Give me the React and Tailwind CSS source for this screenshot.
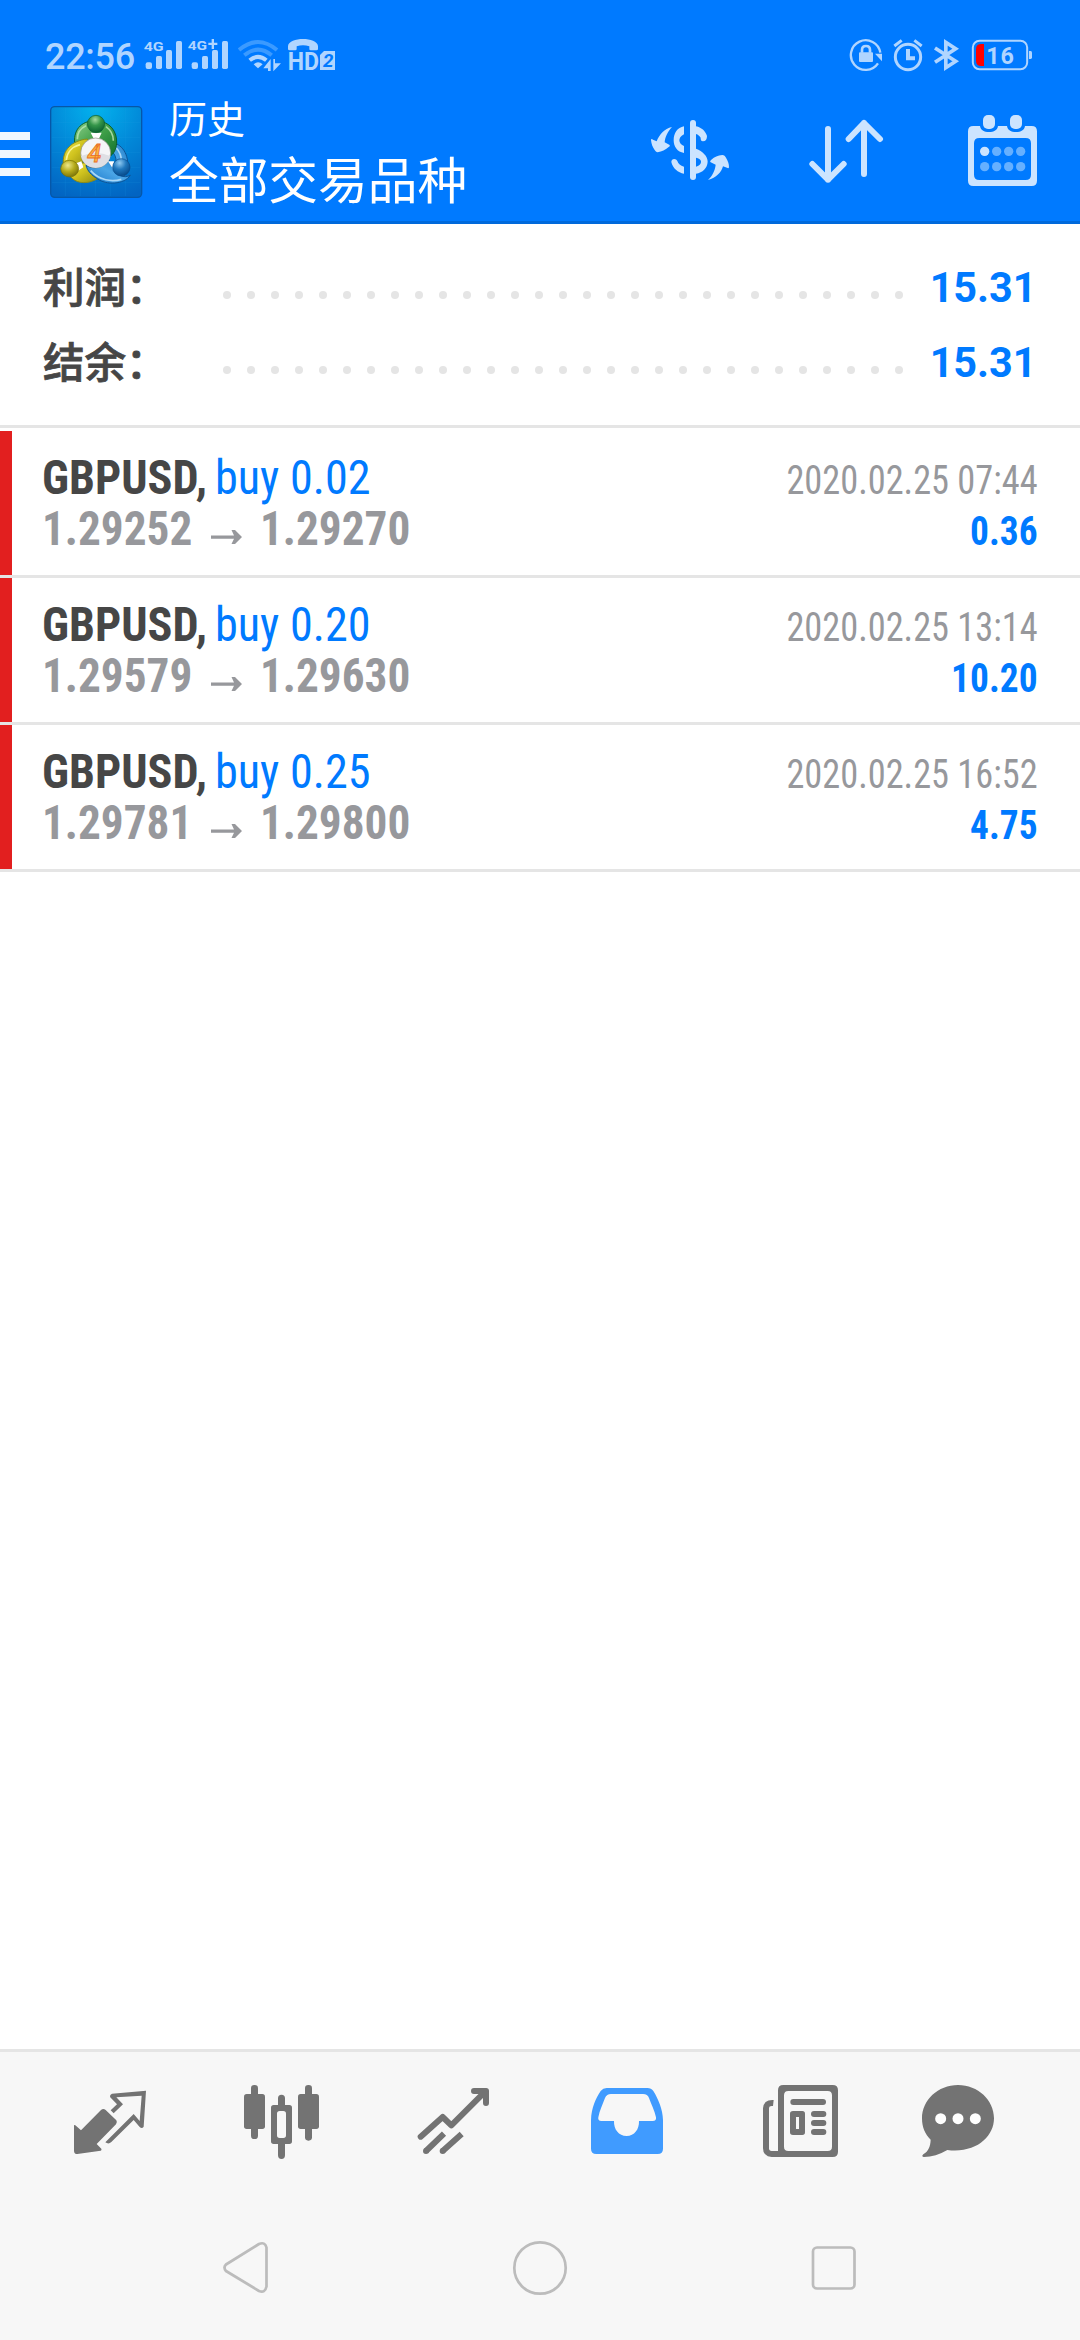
import React from "react";

const PALE = "#b0d5ff";
const ICON = "#cce4ff";
const GRAY = "#737373";

function Signal({ plus }) {
  return plus ? (
    <svg className="ml-1 h-[38px] w-[42px]" viewBox="561 48 126 114" fill={PALE}>
      <text x="563" y="90" fontSize="37" fontWeight="700" fontFamily="Roboto" textLength="58" lengthAdjust="spacingAndGlyphs">4G</text>
      <path d="M625 68h10v-11h7v11h10v7h-10v12h-7v-12h-10z" />
      <rect x="575" y="127" width="19" height="20" rx="6" />
      <rect x="606" y="108" width="18" height="39" rx="5" />
      <rect x="636" y="90" width="18" height="57" rx="5" />
      <rect x="666" y="63" width="18" height="84" rx="5" />
    </svg>
  ) : (
    <svg className="ml-[9px] h-[38px] w-10" viewBox="429 48 120 114" fill={PALE}>
      <text x="431" y="94" fontSize="37" fontWeight="700" fontFamily="Roboto" textLength="60" lengthAdjust="spacingAndGlyphs">4G</text>
      <rect x="437" y="127" width="19" height="20" rx="6" />
      <rect x="468" y="108" width="18" height="39" rx="5" />
      <rect x="498" y="90" width="18" height="57" rx="5" />
      <rect x="528" y="63" width="18" height="84" rx="5" />
    </svg>
  );
}

function Wifi() {
  return (
    <svg className="ml-[9px] h-[38px] w-[43px]" viewBox="714 48 129 114" fill="none">
      <path d="M717 90Q774 42 831 90" stroke="#3b9aff" strokeWidth="12" />
      <path d="M733 106Q774 72 815 106" stroke="#3b9aff" strokeWidth="12" />
      <path d="M749 121Q774 100 799 121" stroke={PALE} strokeWidth="12" />
      <path d="M761 133Q774 121 788 133L774 145Z" fill={PALE} />
      <path d="M790 145L812 117V153H804V145ZM820 117H825V130H843L820 154Z" fill={PALE} />
    </svg>
  );
}

function VoiceHd() {
  return (
    <svg className="ml-1.5 h-[38px] w-[49px]" viewBox="861 48 147 114" fill={PALE}>
      <path d="M864 87V78C867 50 951 50 954 78V87Q954 91 949 91H932Q928 91 928 87V79Q909 72 890 79V87Q890 91 886 91H869Q864 91 864 87Z" />
      <text x="863" y="150" fontSize="77" fontWeight="700" fontFamily="Roboto" textLength="94" lengthAdjust="spacingAndGlyphs">HD</text>
      <path d="M972 93H1005V150H960V105Z" />
      <text x="969" y="142" fontSize="56" fontWeight="700" fontStyle="italic" fontFamily="Roboto" fill="#007aff">2</text>
    </svg>
  );
}

function RotationLock() {
  return (
    <svg className="h-[38px] w-[34px]" viewBox="87 48 102 114" fill="none" stroke={PALE}>
      <path d="M174 130A44.500 44.500 0 1 1 181 98" strokeWidth="7" />
      <path d="M165 101H186V124Z" fill={PALE} stroke="none" />
      <rect x="117" y="97" width="42" height="29" rx="3" fill={PALE} stroke="none" />
      <path d="M126 98V90Q126 78 138 78Q150 78 150 90V98" strokeWidth="8" />
    </svg>
  );
}

function Alarm() {
  return (
    <svg className="ml-2.5 h-[38px] w-[30px]" viewBox="219 48 90 114" fill="none" stroke={PALE} strokeWidth="8">
      <circle cx="264" cy="111" r="38" strokeWidth="9" />
      <path d="M264 87V115H285" strokeWidth="12" />
      <path d="M223 78L245 61M283 61L305 78" strokeWidth="9" />
    </svg>
  );
}

function Bluetooth() {
  return (
    <svg className="ml-2.5 h-[38px] w-[27px]" viewBox="339 48 81 114" fill="none" stroke={PALE} strokeWidth="11">
      <path d="M345 84L407 124L377.500 143V67L407 86L345 127" />
    </svg>
  );
}

function Battery() {
  return (
    <svg className="ml-[11px] h-[38px] w-[62px]" viewBox="453 48 186 114" fill="none">
      <rect x="458.500" y="62.500" width="163" height="85" rx="20" stroke={PALE} strokeWidth="6" />
      <path d="M492 72V138H484Q468 138 468 122V88Q468 72 484 72Z" fill="#f00" />
      <path d="M627 93H632Q636 93 636 98V112Q636 117 632 117H627Z" fill={PALE} />
      <text x="499" y="132" fontSize="70" fontWeight="700" fontFamily="Roboto" fill={PALE} textLength="83" lengthAdjust="spacing">16</text>
    </svg>
  );
}

function AppLogo() {
  return (
    <svg className="ml-5 h-[93px] w-[93px]" viewBox="150 255 279 279">
      <defs>
        <radialGradient id="sky" cx=".5" cy="0" r="1.05">
          <stop offset="0" stopColor="#03b3ee" />
          <stop offset=".5" stopColor="#0288d8" />
          <stop offset="1" stopColor="#0264c2" />
        </radialGradient>
        <linearGradient id="green" x1="0" y1="0" x2="1" y2="1">
          <stop offset="0" stopColor="#8fd08c" />
          <stop offset=".5" stopColor="#3f9f48" />
          <stop offset="1" stopColor="#11702b" />
        </linearGradient>
        <linearGradient id="gold" x1="0" y1="0" x2="1" y2="1">
          <stop offset="0" stopColor="#f4ea4a" />
          <stop offset=".5" stopColor="#cfc21e" />
          <stop offset="1" stopColor="#8f8a12" />
        </linearGradient>
        <linearGradient id="azure" x1="0" y1="1" x2="1" y2="0">
          <stop offset="0" stopColor="#1673c8" />
          <stop offset=".5" stopColor="#4aa5e6" />
          <stop offset="1" stopColor="#1c78c4" />
        </linearGradient>
        <radialGradient id="ballGreen" cx=".45" cy=".25" r=".75">
          <stop offset="0" stopColor="#a5dba0" /><stop offset=".45" stopColor="#35964a" /><stop offset="1" stopColor="#0b6030" />
        </radialGradient>
        <radialGradient id="ballGold" cx=".4" cy=".3" r=".75">
          <stop offset="0" stopColor="#eee88a" /><stop offset=".5" stopColor="#b5ab1b" /><stop offset="1" stopColor="#756f08" />
        </radialGradient>
        <radialGradient id="ballBlue" cx=".4" cy=".25" r=".75">
          <stop offset="0" stopColor="#8fcaf2" /><stop offset=".5" stopColor="#1f77bd" /><stop offset="1" stopColor="#084c8c" />
        </radialGradient>
      </defs>
      <rect x="152" y="260" width="273" height="272" rx="12" fill="url(#sky)" stroke="#0657a8" strokeWidth="4" />
      <path d="M196 264V528M241 264V528M286 264V528M331 264V528M376 264V528M156 308H421M156 353H421M156 398H421M156 443H421M156 488H421" stroke="#2aa5e8" strokeOpacity=".22" strokeWidth="2" />
      <path d="M325 366C360 366 386 396 383 440C383 462 375 472 362 470L340 450C354 430 350 400 330 392Z" fill="url(#azure)" stroke="#0d5496" strokeWidth="3" />
      <path d="M349 384C358 394 364 408 364 422" fill="none" stroke="#a9d8f8" strokeWidth="5" />
      <path d="M224 368C220 325 250 300 288 303C330 303 352 335 350 370C348 388 342 402 328 410L290 390L250 366Z" fill="url(#green)" stroke="#0c6128" strokeWidth="3" />
      <path d="M232 358C232 340 242 324 258 317M318 320C332 330 340 346 340 362" fill="none" stroke="#bde8b5" strokeOpacity=".8" strokeWidth="5" />
      <path d="M262 357C215 362 186 390 190 434L240 440L262 400Z" fill="url(#gold)" stroke="#8f8a12" strokeWidth="3" />
      <path d="M206 462C224 493 262 494 292 476L282 426L238 430C240 448 230 466 206 462Z" fill="url(#gold)" stroke="#8f8a12" strokeWidth="3" />
      <path d="M199 420C201 398 216 380 240 374" fill="none" stroke="#fbf7a0" strokeOpacity=".9" strokeWidth="5" />
      <path d="M258 436C276 446 306 450 324 416L346 448C352 466 370 476 391 466C372 494 318 496 292 476C274 466 262 452 258 436Z" fill="url(#azure)" stroke="#0d5496" strokeWidth="3" />
      <path d="M272 452C298 482 336 486 364 478" fill="none" stroke="#a9d8f8" strokeWidth="5" />
      <path d="M272 338H305L296 358H282ZM228 430L244 424L250 442L234 452ZM324 424L342 424L340 448Z" fill="#fff" />
      <circle cx="288" cy="312" r="26" fill="url(#ballGreen)" stroke="#0b6030" strokeWidth="2" />
      <ellipse cx="209" cy="446" rx="27" ry="25" fill="url(#ballGold)" stroke="#756f08" strokeWidth="2" />
      <circle cx="364" cy="442" r="26" fill="url(#ballBlue)" stroke="#084c8c" strokeWidth="2" />
      <circle cx="287" cy="399" r="45" fill="#f5f5f7" stroke="#8c8c80" strokeWidth="2" />
      <path d="M243 408Q287 390 331 408A45 45 0 0 1 243 408" fill="#dfdfe4" />
      <text x="262" y="425" fontSize="76" fontWeight="500" fontStyle="italic" fontFamily="Roboto" fill="#fdb53e" stroke="#ea6f2a" strokeWidth="2.500">4</text>
    </svg>
  );
}

function CurrencySwap() {
  return (
    <svg className="h-[61px] w-[79px]" viewBox="93 87 237 183" fill={ICON}>
      <path d="M192 109V133C181 139 178 146 178 151C178 159 184 165 192 168V189C172 186 161 170 161 151C161 129 172 113 192 109Z" />
      <path d="M228 109C246 113 257 124 261 138C261 148 257 154 249 154C242 153 242 147 242 143C239 138 234 134 228 132Z" />
      <path fillRule="evenodd" d="M228 176C248 184 263 198 263 215C262 234 248 248 228 251ZM228 203V230C239 227 244 221 243 214C242 208 236 204 228 203Z" />
      <path d="M192 251V230C181 228 175 221 172 213C169 205 154 204 154 216C158 235 174 248 192 251Z" />
      <rect x="210" y="90" width="18" height="180" rx="9" />
      <path d="M156 111C145 122 135 140 134 157L149 165C150 168 149 170 145 172C136 180 126 184 113 187C109 187 106 183 104 180C98 171 94 162 93 150C93 146 96 146 99 149L110 154C118 134 133 116 156 111Z" />
      <path d="M264 270C276 258 285 243 287 224L272 217C269 214 271 212 274 209C284 201 293 196 307 195C312 195 316 199 318 203C324 213 327 221 327 232C327 235 324 235 321 233L309 229C304 247 289 264 264 270Z" />
    </svg>
  );
}

function SortArrows() {
  return (
    <svg className="ml-[79px] h-16 w-[75px]" viewBox="567 87 225 192" fill="none" stroke={ICON} strokeWidth="18" strokeLinecap="round" strokeLinejoin="round">
      <path d="M624 117V269M577 222L624 269L671 222" />
      <path d="M732 252V99M686 147L732 99L780 147" />
    </svg>
  );
}

function Calendar() {
  const columns = [494, 530, 566, 602];
  return (
    <svg className="ml-[84px] h-[73px] w-[70px]" viewBox="444 282 210 219" fill={ICON}>
      <path fillRule="evenodd" d="M460 318H480C482 330 492 336 507 336C522 336 532 330 534 318H561C563 330 573 336 588 336C603 336 613 330 615 318H635Q651 318 651 334V482Q651 498 635 498H460Q444 498 444 482V334Q444 318 460 318ZM478 354Q462 354 462 370V464Q462 480 478 480H617Q633 480 633 464V370Q633 354 617 354Z" />
      <rect x="489" y="285" width="36" height="42" rx="15" />
      <rect x="570" y="285" width="36" height="42" rx="15" />
      {columns.map((cx, i) => (
        <g key={cx} fill="#66b0ff">
          <circle cx={cx} cy="394" r="14" fill={i === 0 ? ICON : "#66b0ff"} />
          <circle cx={cx} cy="440" r="14" />
        </g>
      ))}
    </svg>
  );
}

function SummaryRow({ label, value }) {
  return (
    <div className="flex h-[75px] items-center pl-[43px] pr-[43px]">
      <span className="-mt-1 w-[180px] whitespace-nowrap font-['Noto_Sans_CJK_SC',sans-serif] text-[41.500px] font-medium leading-none text-[#464646] [-webkit-text-stroke:0.8px_#464646]">{label}</span>
      <span className="mt-[15px] flex gap-4">
        {Array.from({ length: 29 }, (_, i) => (
          <span key={i} className="size-2 rounded-full bg-[#e5e5e5]" />
        ))}
      </span>
      <span className="ml-auto origin-right scale-x-[0.985] text-[42px] font-bold leading-none text-[#007aff]">{value}</span>
    </div>
  );
}

const deals = [
  { volume: "0.02", open: "1.29252", close: "1.29270", time: "2020.02.25 07:44", profit: "0.36" },
  { volume: "0.20", open: "1.29579", close: "1.29630", time: "2020.02.25 13:14", profit: "10.20" },
  { volume: "0.25", open: "1.29781", close: "1.29800", time: "2020.02.25 16:52", profit: "4.75" },
];

function DealRow({ deal }) {
  return (
    <div className="flex h-[147px] justify-between border-b-[3px] border-[#e5e5e5] font-['Roboto_Condensed','Roboto',sans-serif] whitespace-nowrap [font-stretch:75%]">
      <div className="w-3 bg-[#e21f1f]" />
      <div className="ml-[30px] mt-[21px] flex-1 text-[48px] leading-[51px]">
        <div className="flex h-[51px]">
          <span className="w-[173px] origin-left scale-x-[0.962] font-bold text-[#464646]">GBPUSD,</span>
          <span className="origin-left scale-x-[0.962] text-[#007aff]">buy {deal.volume}</span>
        </div>
        <div className="flex h-[51px] items-center font-bold text-[#97989c]">
          <span className="w-[169px] origin-left scale-x-[0.942]">{deal.open}</span>
          <svg className="mt-4 h-[14px] w-[31px]" viewBox="0 0 31 14" fill="#97989c">
            <path d="M0 5.500H23L20.500 0H24L31 7L24 14H20.500L23 8.700H0Z" />
          </svg>
          <span className="ml-[18px] origin-left scale-x-[0.942]">{deal.close}</span>
        </div>
      </div>
      <div className="mr-[42px] mt-6 text-right text-[40px] leading-[51px]">
        <div className="origin-right scale-x-[0.908] text-[#97989c]">{deal.time}</div>
        <div className="origin-right scale-x-[0.935] font-bold text-[#007aff]">{deal.profit}</div>
      </div>
    </div>
  );
}

function TabBar() {
  return (
    <div className="flex h-[144px] border-t-[3px] border-[#e5e5e5] pt-8">
      <svg className="ml-[73px] h-[76px] w-[74px]" viewBox="99 132 222 228" fill={GRAY}>
        <path d="M102 256Q103 254 106 256L123 271L183 210Q190 204 197 210L229 241Q233 247 228 253L170 312L184 326Q186 330 182 332L112 342Q102 342 102 332Z" />
        <path fillRule="evenodd" d="M318 152L311 260Q306 267 299 261L281 240L214 306Q206 314 196 307L281 222L299 243L305 167L229 172L249 193L221 220L212 211L231 193L210 171Q209 163 216 161Z" />
      </svg>
      <svg className="ml-24 h-[76px] w-[77px]" viewBox="609 132 231 228" fill={GRAY}>
        <rect x="612" y="162" width="63" height="105" rx="8" />
        <rect x="633" y="135" width="21" height="162" rx="10" />
        <rect x="774" y="162" width="63" height="105" rx="8" />
        <rect x="795" y="135" width="21" height="167" rx="10" />
        <path d="M714 175Q714 164 724.500 164Q735 164 735 175V195H714ZM714 311H735V346Q735 357 724.500 357Q714 357 714 346Z" />
        <path fillRule="evenodd" d="M701 195H748Q756 195 756 203V304Q756 312 748 312H701Q693 312 693 304V203Q693 195 701 195ZM719 213Q711 213 711 221V286Q711 294 719 294H730Q738 294 738 286V221Q738 213 730 213Z" />
      </svg>
      <svg className="ml-[97px] h-[76px] w-[73px]" viewBox="1131 132 219 228" fill="none" stroke={GRAY} strokeWidth="18" strokeLinejoin="round">
        <path d="M1142 290L1208 231L1234 256L1336 154" strokeLinecap="round" />
        <path d="M1302 153H1338V189" strokeLinecap="round" />
        <path d="M1158 333L1212 281M1208 333L1265 282" />
        <path d="M1158 333h.1M1208 333h.1" strokeLinecap="round" />
      </svg>
      <svg className="ml-[101px] h-[76px] w-[72px]" viewBox="93 132 216 228">
        <path fill="#409bff" fillRule="evenodd" d="M93 326V240C94 204 108 173 122 153Q129 144 140 144H262Q274 144 280 153C295 177 308 208 309 240V326Q309 342 293 342H109Q93 342 93 326ZM115 232Q113 243 124 243H162C161 268 176 288 200 288C223 288 238 268 237 243H278Q290 243 288 232C284 212 273 191 267 174Q263 162 249 162H153Q140 162 135 174C127 195 119 211 115 232Z" />
      </svg>
      <svg className="ml-[99px] h-[76px] w-[77px]" viewBox="606 132 231 228" fill={GRAY}>
        <path d="M641 180L639 198Q627 196 627 205V325Q627 333 635 333H660V351H635Q609 349 609 325V205Q611 178 641 180Z" />
        <path fillRule="evenodd" d="M670 135H818Q834 135 834 151V335Q834 351 818 351H654V151Q654 135 670 135ZM685 153Q672 153 672 166V320Q672 333 685 333H803Q816 333 816 320V166Q816 153 803 153Z" />
        <rect x="691" y="177" width="107" height="18" rx="9" />
        <path fillRule="evenodd" d="M699 213H727Q735 213 735 221V277Q735 285 727 285H699Q690 285 690 277V221Q690 213 699 213ZM708 231V267H717V231Z" />
        <rect x="753" y="213" width="46" height="18" rx="9" />
        <rect x="753" y="240" width="46" height="18" rx="9" />
        <rect x="753" y="267" width="46" height="18" rx="9" />
      </svg>
      <svg className="ml-[82px] h-[76px] w-[74px]" viewBox="1083 132 222 228" fill={GRAY}>
        <path d="M1194 135C1254 135 1302 180 1302 235C1302 290 1248 341 1162 330C1139 344 1115 351 1092 351Q1083 350 1090 343C1106 333 1111 319 1112 299C1095 282 1086 262 1086 235C1086 180 1134 135 1194 135Z" />
        <g fill="#fff">
          <circle cx="1142" cy="236" r="16.500" />
          <circle cx="1194" cy="236" r="16.500" />
          <circle cx="1246" cy="236" r="16.500" />
        </g>
      </svg>
    </div>
  );
}

export default function App() {
  return (
    <div className="flex h-[2340px] w-[1080px] flex-col overflow-hidden bg-white font-['Roboto',sans-serif]">
      <header className="flex h-[224px] flex-col border-b-[3px] border-[#0069db] bg-[#007aff]">
        <div className="flex h-[88px] items-start pl-[45px] pr-[47px] pt-9">
          <span className="mt-px w-[89px] whitespace-nowrap text-[36px] font-medium leading-10 tracking-[-0.300px] text-[#b0d5ff]">22:56</span>
          <Signal />
          <Signal plus />
          <Wifi />
          <VoiceHd />
          <div className="ml-auto flex">
            <RotationLock />
            <Alarm />
            <Bluetooth />
            <Battery />
          </div>
        </div>
        <div className="flex items-start">
          <div className="mt-11 flex w-[30px] flex-col gap-2.5">
            <span className="h-2 bg-[#f0f7ff]" />
            <span className="h-2 bg-[#f0f7ff]" />
            <span className="h-2 bg-[#f0f7ff]" />
          </div>
          <div className="mt-[17px]">
            <AppLogo />
          </div>
          <div className="ml-[26px] w-[482px] font-['Noto_Sans_CJK_SC',sans-serif] font-normal text-white">
            <div className="mt-1 text-[38px] leading-[49px]">历史</div>
            <div className="text-[49.700px] leading-[72px]">全部交易品种</div>
          </div>
          <div className="mt-[31px] flex">
            <CurrencySwap />
            <SortArrows />
            <div className="-mt-[5px]">
              <Calendar />
            </div>
          </div>
        </div>
      </header>
      <section className="h-[204px] border-b-[3px] border-[#e5e5e5] pt-[26px]">
        <SummaryRow label="利润：" value="15.31" />
        <SummaryRow label="结余：" value="15.31" />
      </section>
      <main className="flex-1 pt-[3px]">
        {deals.map((deal) => (
          <DealRow key={deal.time} deal={deal} />
        ))}
      </main>
      <footer className="h-[291px] bg-[#f7f7f7]">
        <TabBar />
        <div className="flex h-[147px] pt-[45px]">
          <svg className="ml-[221px] h-[60px] w-[50px]" viewBox="0 -1.500 50 60" fill="none" stroke="#bcbcbc" strokeWidth="2.700" strokeLinejoin="round">
            <path d="M5 25L38 4.500Q44 2 45.500 8V47Q44 54 38 51.500L5 31.500Q2 28 5 25Z" />
          </svg>
          <svg className="ml-[239px] h-[60px] w-[60px]" viewBox="0 0 60 60" fill="none" stroke="#bcbcbc" strokeWidth="2.700">
            <circle cx="30" cy="30" r="25.700" />
          </svg>
          <svg className="ml-[237px] h-[60px] w-[54px]" viewBox="0 0 54 60" fill="none" stroke="#bcbcbc" strokeWidth="2.700">
            <rect x="6" y="9.500" width="41.500" height="41" rx="4" />
          </svg>
        </div>
      </footer>
    </div>
  );
}
